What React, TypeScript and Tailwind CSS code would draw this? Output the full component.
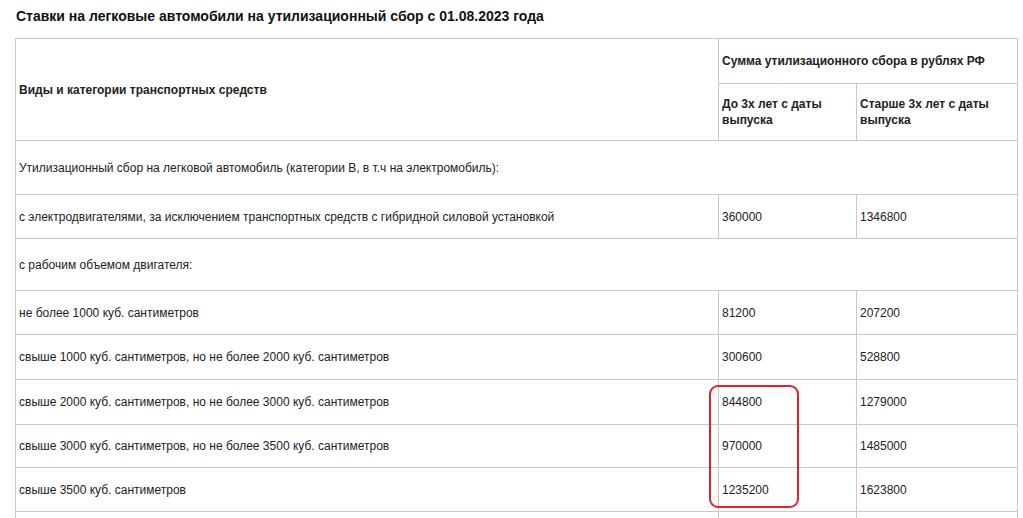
import React from "react";

const rows: { label: string; a?: string; b?: string; h: number }[] = [
  { label: "Утилизационный сбор на легковой автомобиль (категории B, в т.ч на электромобиль):", h: 54 },
  { label: "с электродвигателями, за исключением транспортных средств с гибридной силовой установкой", a: "360000", b: "1346800", h: 44 },
  { label: "с рабочим объемом двигателя:", h: 52 },
  { label: "не более 1000 куб. сантиметров", a: "81200", b: "207200", h: 44 },
  { label: "свыше 1000 куб. сантиметров, но не более 2000 куб. сантиметров", a: "300600", b: "528800", h: 45 },
  { label: "свыше 2000 куб. сантиметров, но не более 3000 куб. сантиметров", a: "844800", b: "1279000", h: 45 },
  { label: "свыше 3000 куб. сантиметров, но не более 3500 куб. сантиметров", a: "970000", b: "1485000", h: 43 },
  { label: "свыше 3500 куб. сантиметров", a: "1235200", b: "1623800", h: 44 },
  { label: "", a: "", b: "", h: 44 },
];

export default function App() {
  const cell = "border border-[#c9c9c9] px-[3px] align-middle text-left";
  return (
    <div
      className="relative w-[1023px] h-[518px] overflow-hidden bg-white text-[12px] text-[#222222]"
      style={{ fontFamily: '"Liberation Sans", Arial, sans-serif' }}
    >
      <h1 className="pl-[16px] pt-[8px] h-[38px] text-[14px] leading-[16px] font-bold text-[#111111]">
        Ставки на легковые автомобили на утилизационный сбор с 01.08.2023 года
      </h1>
      <table className="ml-[15px] w-[1002px] table-fixed border-collapse">
        <colgroup>
          <col className="w-[703px]" />
          <col className="w-[138px]" />
          <col className="w-[161px]" />
        </colgroup>
        <thead>
          <tr className="h-[45px]">
            <th rowSpan={2} className={`${cell} font-bold`}>
              Виды и категории транспортных средств
            </th>
            <th colSpan={2} className={`${cell} font-bold`}>
              Сумма утилизационного сбора в рублях РФ
            </th>
          </tr>
          <tr className="h-[57px]">
            <th className={`${cell} font-bold leading-[16px]`}>До 3х лет с даты выпуска</th>
            <th className={`${cell} font-bold leading-[16px]`}>Старше 3х лет с даты выпуска</th>
          </tr>
        </thead>
        <tbody>
          {rows.map((r, i) =>
            r.a === undefined ? (
              <tr key={i} style={{ height: r.h }}>
                <td colSpan={3} className={cell}>
                  {r.label}
                </td>
              </tr>
            ) : (
              <tr key={i} style={{ height: r.h }}>
                <td className={cell}>{r.label}</td>
                <td className={cell}>{r.a}</td>
                <td className={cell}>{r.b}</td>
              </tr>
            )
          )}
        </tbody>
      </table>
      <div className="absolute left-[709px] top-[385px] w-[90px] h-[123px] rounded-[9px] border-2 border-[#e3202c]" />
    </div>
  );
}
